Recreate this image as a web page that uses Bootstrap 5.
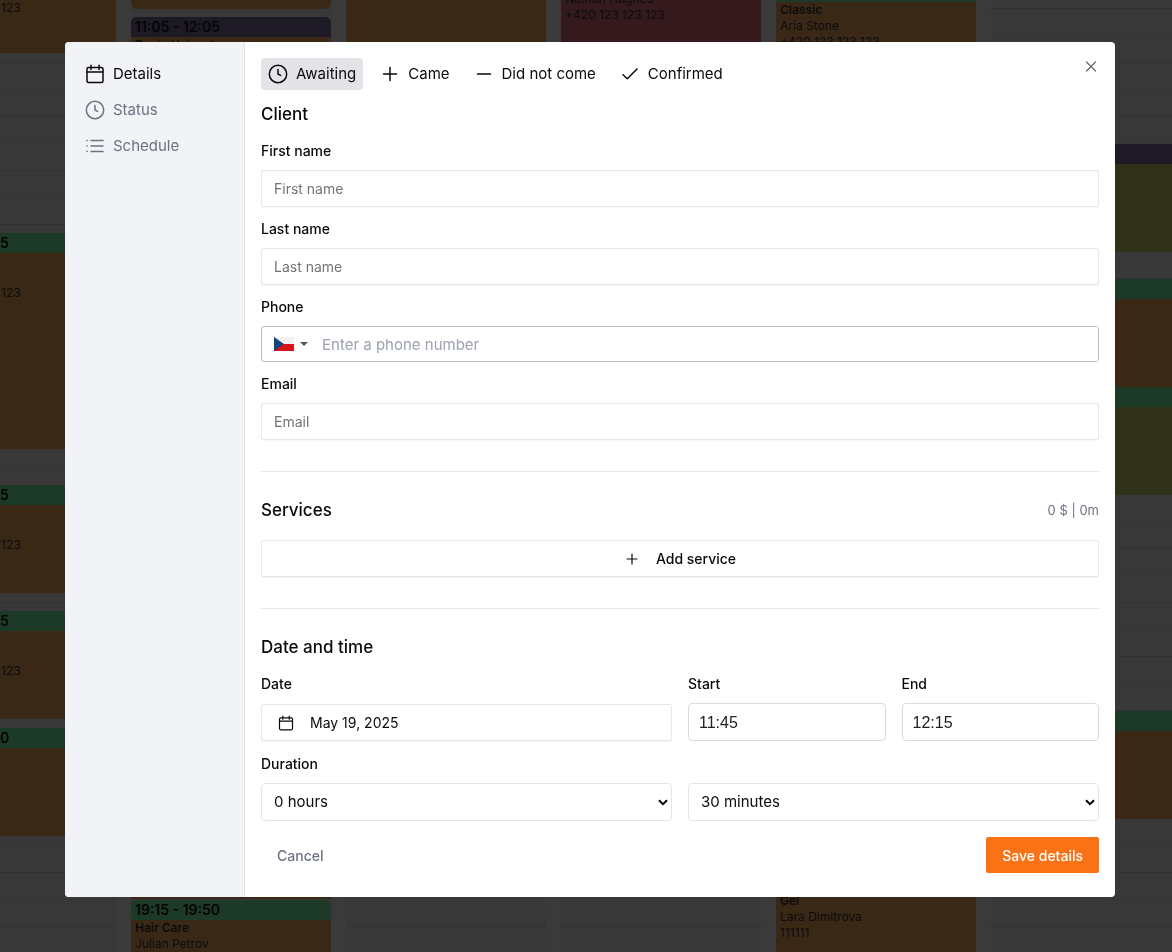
<!DOCTYPE html>
<html lang="en">
<head>
<meta charset="utf-8">
<meta name="viewport" content="width=device-width, initial-scale=1">
<title>Appointment details</title>
<link href="https://cdn.jsdelivr.net/npm/bootstrap@5.3.0/dist/css/bootstrap.min.css" rel="stylesheet">
<style>
  body { font-family: Inter, "Liberation Sans", sans-serif; font-size: 15px; line-height: 24px; color: #0a0a0a; background: #3a3a3a; height: 100vh; overflow: hidden; }
  svg { flex: none; fill: none; stroke: currentColor; stroke-width: 1.5; stroke-linecap: round; stroke-linejoin: round; }
  svg.thin { stroke-width: 1.2; }
  svg.solid { stroke: none; }

  /* Dimmed calendar behind the dialog */
  .calendar { display: grid; grid-template-columns: 116px repeat(5, 200px); column-gap: 15px; height: 100vh; overflow: hidden; color: #0c0c0c; font-size: 12px; line-height: 16px; }
  .day { background: linear-gradient(to bottom, #383838 8px, #323232 8px 9px, #383838 9px 35px, #363636 35px 36px, #383838 36px) 0 0 / 100% 54px; overflow: hidden; }
  .event { margin-top: var(--gap, 0); height: var(--len); background: #3a2817; overflow: hidden; padding-left: 4px; }
  .event.cut { padding-left: 1px; }
  .event header { height: 20px; margin-left: -4px; padding-left: 4px; line-height: 20px; font-size: 14px; font-weight: 600; color: #050505; background: #1d3927; }
  .event.cut header { margin-left: -1px; padding-left: 0; }
  .event header.violet { background: #1d1925; }
  .event.olive { background: #2f3218; }
  .event.rose { background: #341a1d; }
  .event.tail { border-top: 2px solid #1d3927; }
  .event b { font-weight: 600; }
  .cut-phone { padding-top: 32px; }
  .scrolled { margin-top: -9px; }

  /* Dialog */
  .modal { padding: 42px 57px 0 65px; }
  .modal-dialog { max-width: none; margin: 0; }
  .modal-content { border: 0; border-radius: 4px; flex-direction: row; overflow: hidden; }
  .side { flex: 0 0 180px; background: #f1f3f6; border-right: 1px solid #e1e3e7; padding: 14px 20px; }
  .side .nav-link { padding: 0; height: 36px; color: #6b7280; font-size: 15px; }
  .side .nav-link.active { color: #0a0a0a; }
  .panel { padding: 16px 16px 24px; min-width: 0; }
  .tabs { gap: 10px; margin-bottom: 10px; }
  .tab-btn { height: 32px; padding: 0 7px; border: 0; border-radius: 4px; background: none; color: #0a0a0a; }
  .tab-btn.active { background: #e4e4e8; }
  .close-btn { top: 16px; right: 16px; width: 16px; height: 16px; padding: 0; border: 0; background: none; color: #666; }
  h2 { font-size: 17px; line-height: 28px; font-weight: 500; margin: 0; }
  .form-label { display: block; font-size: 14px; line-height: 20px; font-weight: 500; margin: 0 0 9px; }
  .field { margin-bottom: 12px; }
  .field.first { margin-top: 13px; }
  .field.when { margin-bottom: 13px; }
  .form-control, .box-btn { height: 37px; padding: 0 12px; font-size: 14px; color: #0a0a0a; background: #fff; border: 1px solid #e7e7e7; border-radius: 2px; box-shadow: 0 1px 1px rgba(0,0,0,.04); }
  .form-control::placeholder { color: #73736f; opacity: 1; }
  .phone { height: 36px; border: 1px solid #bdbdbd; border-radius: 3px; }
  .phone button { width: 54px; padding: 0 0 0 12px; border: 0; background: none; color: #555; }
  .phone .form-control { height: 34px; border: 0; box-shadow: none; padding: 0 6px; font-size: 15px; }
  .phone .form-control::placeholder { color: #9ca3af; }
  .rule { height: 1px; border: 0; margin: 31px 0 24px; background: #e7e7e7; opacity: 1; }
  .totals { font-size: 13px; color: #6b7280; }
  .box-btn.add { margin-top: 16px; font-weight: 500; }
  .box-btn.date { margin-top: 10px; padding: 0 16px; }
  .form-control.time { height: 38px; padding: 2px 10px 0; font-family: "Liberation Sans", sans-serif; font-size: 16px; color: #222; border-color: #dcdcdc; border-radius: 4px; box-shadow: none; }
  .form-select { height: 38px; padding: 0 24px 0 12px; font-size: 15px; color: #0a0a0a; border: 1px solid #e5e5e5; border-radius: 4px;
    background: #fff url("data:image/svg+xml,%3Csvg xmlns='http://www.w3.org/2000/svg' viewBox='0 0 10 7'%3E%3Cpath d='M1 1.2l4 4 4-4' fill='none' stroke='%23000' stroke-width='2'/%3E%3C/svg%3E") no-repeat right 3px center / 10px 7px; }
  .foot { margin-top: 16px; }
  .foot .btn { height: 36px; padding: 0 16px; font-size: 14px; font-weight: 500; border: 0; border-radius: 2px; color: #6b7280; }
  .foot .btn.save { color: #fff; background: #f97316; }
</style>
</head>
<body>

<div class="calendar" aria-hidden="true">
  <div class="day">
    <div class="event cut" style="--len:53px">123</div>
    <div class="event cut" style="--gap:180px;--len:216px"><header>5</header><div class="cut-phone">123</div></div>
    <div class="event cut" style="--gap:36px;--len:108px"><header>5</header><div class="cut-phone">123</div></div>
    <div class="event cut" style="--gap:18px;--len:108px"><header>5</header><div class="cut-phone">123</div></div>
    <div class="event cut" style="--gap:9px;--len:108px"><header>0</header></div>
  </div>
  <div class="day">
    <div class="event rounded-bottom" style="--len:9px"></div>
    <div class="event rounded-top" style="--gap:8px;--len:128px"><header class="violet">11:05 - 12:05</header><b>Denis Heinert</b></div>
    <div class="event" style="--gap:646px;--len:108px"></div>
    <div class="event rounded-top" style="--gap:1px;--len:63px"><header>19:15 - 19:50</header><b>Hair Care</b><br>Julian Petrov</div>
  </div>
  <div class="day">
    <div class="event" style="--len:120px"></div>
  </div>
  <div class="day">
    <div class="event rose" style="--len:120px"><div class="scrolled">Nathan Hughes<br>+420 123 123 123</div></div>
  </div>
  <div class="day">
    <div class="event tail" style="--len:108px"><b>Classic</b><br>Aria Stone<br>+420 123 123 123</div>
    <div class="event" style="--gap:785px;--len:108px"><b>Gel</b><br>Lara Dimitrova<br>111111</div>
  </div>
  <div class="day">
    <div class="event olive" style="--gap:144px;--len:108px"><header class="violet"></header></div>
    <div class="event" style="--gap:27px;--len:108px"><header></header></div>
    <div class="event olive" style="--len:108px"><header></header></div>
    <div class="event" style="--gap:216px;--len:108px"><header></header></div>
  </div>
</div>

<div class="modal d-block" role="dialog" aria-modal="true" aria-label="Appointment">
  <div class="modal-dialog">
    <div class="modal-content">
      <nav class="side nav flex-column">
        <a href="#" class="nav-link active d-flex align-items-center gap-2">
          <svg width="20" height="20" viewBox="0 0 20 20"><rect x="2" y="3.5" width="16" height="15" rx="1.5"/><path d="M2 8h16M6 1.2v4.3M14 1.2v4.3"/></svg>Details</a>
        <a href="#" class="nav-link d-flex align-items-center gap-2">
          <svg width="20" height="20" viewBox="0 0 20 20"><circle cx="10" cy="10" r="8.7"/><path d="M10 5.6V10l2.6 1.4"/></svg>Status</a>
        <a href="#" class="nav-link d-flex align-items-center gap-2">
          <svg width="20" height="20" viewBox="0 0 20 20"><path d="M6 4.5h12M6 10h12M6 15.5h12M2 4.5h.2M2 10h.2M2 15.5h.2"/></svg>Schedule</a>
      </nav>

      <form class="panel flex-grow-1">
        <button type="button" class="close-btn position-absolute d-flex" aria-label="Close">
          <svg class="thin" width="16" height="16" viewBox="0 0 16 16"><path d="M3.5 4l9 9M12.5 4l-9 9"/></svg>
        </button>
        <div class="tabs d-flex">
          <button type="button" class="tab-btn active d-flex align-items-center gap-2">
            <svg width="20" height="20" viewBox="0 0 20 20"><circle cx="10" cy="10" r="8.7"/><path d="M10 5.6V10l2.6 1.4"/></svg>Awaiting</button>
          <button type="button" class="tab-btn d-flex align-items-center gap-2">
            <svg width="20" height="20" viewBox="0 0 20 20"><path d="M3.5 10h13M10 3.5v13"/></svg>Came</button>
          <button type="button" class="tab-btn d-flex align-items-center gap-2">
            <svg width="20" height="20" viewBox="0 0 20 20"><path d="M3.5 10h13"/></svg>Did not come</button>
          <button type="button" class="tab-btn d-flex align-items-center gap-2">
            <svg width="20" height="20" viewBox="0 0 20 20"><path d="M3 10.8l4.3 4L17 5"/></svg>Confirmed</button>
        </div>

        <h2>Client</h2>
        <div class="field first">
          <label class="form-label" for="first">First name</label>
          <input class="form-control" id="first" type="text" placeholder="First name">
        </div>
        <div class="field">
          <label class="form-label" for="last">Last name</label>
          <input class="form-control" id="last" type="text" placeholder="Last name">
        </div>
        <div class="field">
          <label class="form-label" for="phone">Phone</label>
          <div class="phone d-flex">
            <button type="button" class="d-flex align-items-center flex-shrink-0" aria-label="Country: Czech Republic">
              <svg class="solid" width="20" height="14" viewBox="0 0 20 14"><path fill="#f1f1f1" d="M0 0h20v7H0z"/><path fill="#d7141a" d="M0 7h20v7H0z"/><path fill="#11457e" d="M0 0l10 7-10 7z"/></svg>
              <svg class="solid ms-1" width="12" height="6" viewBox="0 0 12 6"><path d="M2 1h8L6 5z" fill="currentColor"/></svg>
            </button>
            <input class="form-control" id="phone" type="tel" placeholder="Enter a phone number">
          </div>
        </div>
        <div>
          <label class="form-label" for="email">Email</label>
          <input class="form-control" id="email" type="email" placeholder="Email">
        </div>

        <hr class="rule">
        <div class="d-flex justify-content-between align-items-center">
          <h2>Services</h2><span class="totals">0 $ | 0m</span>
        </div>
        <button type="button" class="box-btn add w-100 d-flex align-items-center justify-content-center gap-3">
          <svg class="thin" width="16" height="16" viewBox="0 0 16 16"><path d="M3 8h10M8 3v10"/></svg>Add service</button>

        <hr class="rule">
        <h2>Date and time</h2>
        <div class="field first when row gx-3">
          <div class="col-6">
            <label class="form-label" for="date">Date</label>
            <button type="button" id="date" class="box-btn date w-100 d-flex align-items-center gap-3">
              <svg class="thin" width="16" height="16" viewBox="0 0 16 16"><rect x="1.5" y="2.8" width="13" height="12" rx="1.2"/><path d="M1.5 6.2h13M4.8 1v3.2M11.2 1v3.2"/></svg>May 19, 2025</button>
          </div>
          <div class="col-3">
            <label class="form-label" for="start">Start</label>
            <input class="form-control time" id="start" type="text" value="11:45">
          </div>
          <div class="col-3">
            <label class="form-label" for="end">End</label>
            <input class="form-control time" id="end" type="text" value="12:15">
          </div>
        </div>
        <label class="form-label" for="hours">Duration</label>
        <div class="row gx-3">
          <div class="col-6"><select class="form-select" id="hours"><option>0 hours</option></select></div>
          <div class="col-6"><select class="form-select" aria-label="Minutes"><option>30 minutes</option></select></div>
        </div>
        <div class="foot d-flex justify-content-between">
          <button type="button" class="btn">Cancel</button>
          <button type="submit" class="btn save">Save details</button>
        </div>
      </form>
    </div>
  </div>
</div>
<script src="https://cdn.jsdelivr.net/npm/bootstrap@5.3.0/dist/js/bootstrap.bundle.min.js"></script>
</body>
</html>
